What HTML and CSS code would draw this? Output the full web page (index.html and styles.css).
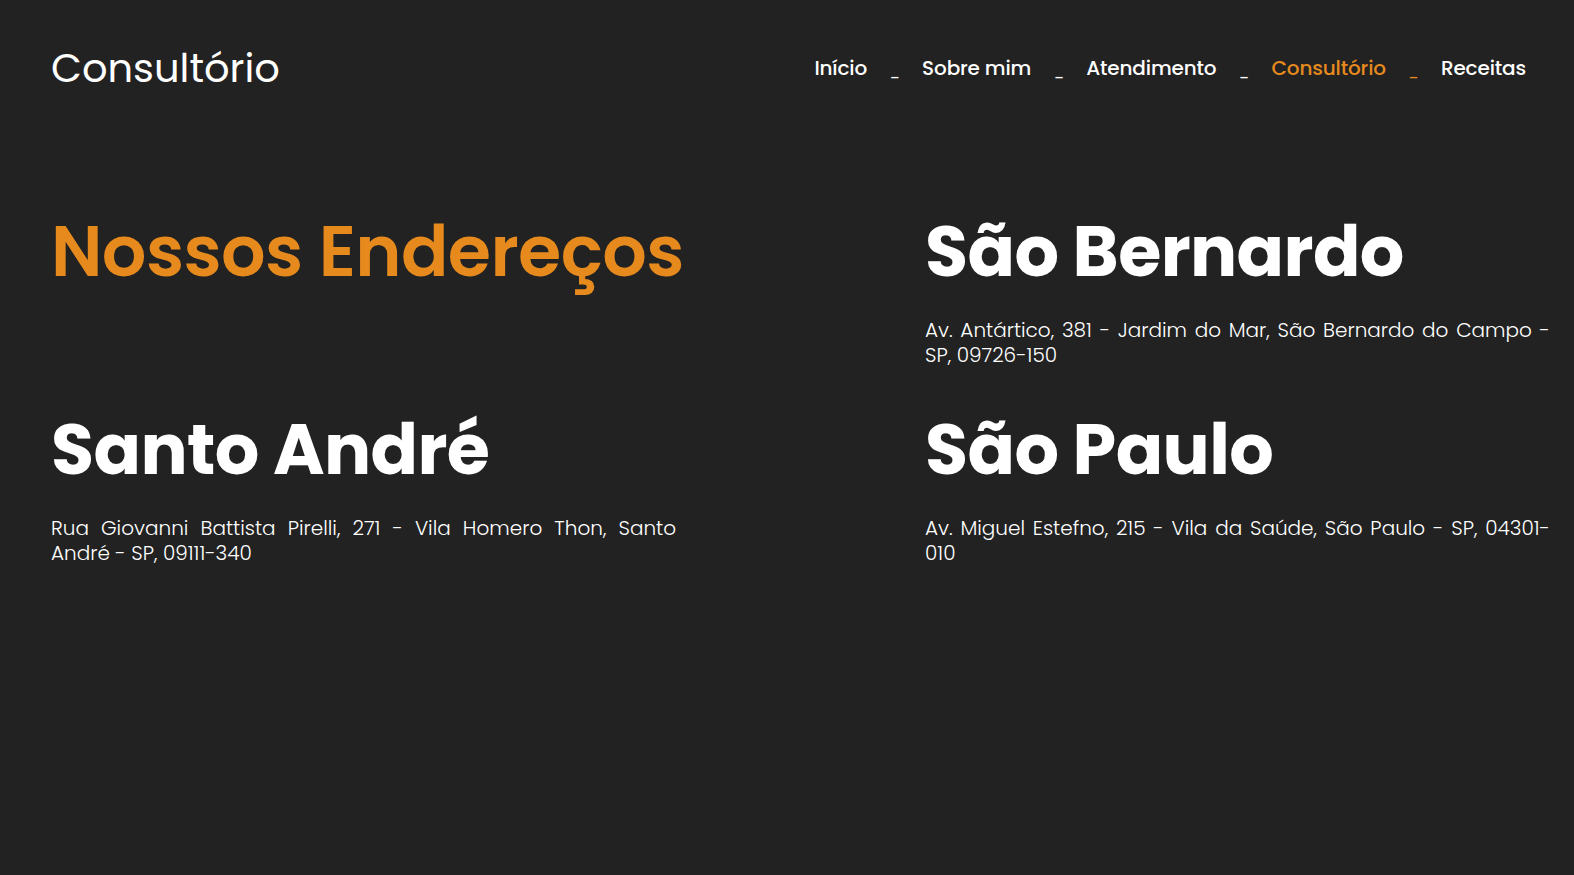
FILE: index.html
```html
<!DOCTYPE html>
<html lang="pt-BR">
<head>
<meta charset="utf-8">
<title>Consultório</title>
<link rel="stylesheet" href="styles.css">
</head>
<body>
<header class="topbar">
  <a class="logo" href="#">Consultório</a>
  <nav class="menu">
    <a href="#" class="menu-item">Início</a>
    <span class="sep">_</span>
    <a href="#" class="menu-item">Sobre mim</a>
    <span class="sep">_</span>
    <a href="#" class="menu-item">Atendimento</a>
    <span class="sep">_</span>
    <a href="#" class="menu-item active">Consultório</a>
    <span class="sep active">_</span>
    <a href="#" class="menu-item">Receitas</a>
  </nav>
</header>
<main class="addresses">
  <div class="cell">
    <h1 class="title">Nossos Endereços</h1>
  </div>
  <div class="cell">
    <h2 class="city">São Bernardo</h2>
    <p class="addr">Av. Antártico, 381 - Jardim do Mar, São Bernardo do Campo - SP, 09726-150</p>
  </div>
  <div class="cell">
    <h2 class="city">Santo André</h2>
    <p class="addr">Rua Giovanni Battista Pirelli, 271 - Vila Homero Thon, Santo André - SP, 09111-340</p>
  </div>
  <div class="cell">
    <h2 class="city">São Paulo</h2>
    <p class="addr">Av. Miguel Estefno, 215 - Vila da Saúde, São Paulo - SP, 04301-010</p>
  </div>
</main>
</body>
</html>
```
FILE: styles.css
```css
html, body {
  margin: 0;
  padding: 0;
  background: #222222;
  color: #ffffff;
  font-family: "Poppins", "Open Sans", "Liberation Sans", sans-serif;
}

body {
  min-height: 875px;
}

a {
  color: inherit;
  text-decoration: none;
}

.topbar {
  display: flex;
  align-items: center;
  justify-content: space-between;
  padding: 40px 48px 0 51px;
  height: 56px;
}

.logo {
  font-size: 40px;
  font-weight: 400;
  line-height: 56px;
}

.menu {
  display: flex;
  align-items: center;
  gap: 22.4px;
  font-size: 20px;
  font-weight: 500;
  letter-spacing: -0.15px;
}

.menu-item.active,
.sep.active {
  color: #e68a1e;
}

.sep {
  position: relative;
  top: 4px;
  font-size: 13px;
}

.addresses {
  display: grid;
  grid-template-columns: 625px 625px;
  column-gap: 249px;
  padding: 106px 0 0 51px;
}

.cell {
  height: 198px;
}

.title,
.city {
  margin: 0;
  font-size: 70px;
  font-weight: 700;
  line-height: 100px;
  letter-spacing: -0.6px;
  white-space: nowrap;
}

.title {
  color: #e68a1e;
  font-weight: 600;
}

.addr {
  margin: 16px 0 0 0;
  font-size: 20px;
  font-weight: 300;
  line-height: 25px;
  text-align: justify;
}
```
